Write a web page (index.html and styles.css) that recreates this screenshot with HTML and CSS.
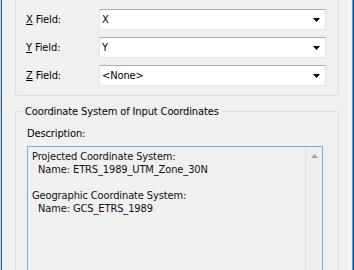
FILE: index.html
```html
<!DOCTYPE html>
<html>
<head>
<meta charset="utf-8">
<link rel="stylesheet" href="styles.css">
</head>
<body>
<div class="frame">
  <div class="panel">
    <div class="group1">
      <div class="row">
        <label class="lbl"><u>X</u> Field:</label>
        <div class="combo"><span>X</span><svg class="arrow" width="7" height="4" viewBox="0 0 7 4"><polygon points="0,0 7,0 3.5,4" fill="#000"/></svg></div>
      </div>
      <div class="row">
        <label class="lbl"><u>Y</u> Field:</label>
        <div class="combo"><span>Y</span><svg class="arrow" width="7" height="4" viewBox="0 0 7 4"><polygon points="0,0 7,0 3.5,4" fill="#000"/></svg></div>
      </div>
      <div class="row">
        <label class="lbl"><u>Z</u> Field:</label>
        <div class="combo"><span>&lt;None&gt;</span><svg class="arrow" width="7" height="4" viewBox="0 0 7 4"><polygon points="0,0 7,0 3.5,4" fill="#000"/></svg></div>
      </div>
    </div>
    <fieldset class="group2">
      <legend>Coordinate System of Input Coordinates</legend>
      <div class="desc-label">Description:</div>
      <div class="desc">
        <div class="desc-text">Projected Coordinate System:
  Name: ETRS_1989_UTM_Zone_30N

Geographic Coordinate System:
  Name: GCS_ETRS_1989</div>
        <div class="vscroll">
          <div class="sbtn"><svg width="7" height="4" viewBox="0 0 7 4"><polygon points="3.5,0 7,4 0,4" fill="#a3a3a3"/></svg></div>
        </div>
      </div>
    </fieldset>
  </div>
</div>
</body>
</html>
```
FILE: styles.css
```css
html, body {
  margin: 0;
  height: 270px;
  overflow: hidden;
  background: #f0f0f0;
}
body {
  font-family: "DejaVu Sans Condensed", "DejaVu Sans", sans-serif;
  font-size: 11px;
  line-height: 13px;
  letter-spacing: -0.12px;
  color: #000;
}
.frame {
  box-sizing: border-box;
  height: 270px;
  overflow: hidden;
  display: flex;
  border-left: 1px solid #b8cfe6;
  border-right: 1px solid #1d4f7f;
  box-shadow: inset 1px 0 #2a5d8f, inset -1px 0 #43a6e5;
}
.panel {
  flex: 1;
  margin: 0 3px 0 1px;
  border-right: 1px solid #fcfcfc;
}
.group1 {
  margin: 0 10px 0 13px;
  border: 1px solid #d5dfe5;
  border-top: none;
  border-radius: 0 0 3px 3px;
  padding: 9px 12px 9px 10px;
  display: flex;
  flex-direction: column;
  gap: 7px;
}
.row {
  display: flex;
  align-items: center;
}
.lbl {
  width: 73px;
  flex: none;
}
.combo {
  flex: 1;
  box-sizing: border-box;
  height: 21px;
  background: #fff;
  border: 1px solid;
  border-color: #abadb3 #e2e3ea #e3e9ef #e2e3ea;
  padding: 0 5px 0 2px;
  display: flex;
  align-items: center;
  justify-content: space-between;
}
.arrow { display: block; }
.group2 {
  margin: 9px 10px 0 13px;
  padding: 9px 15px 0 11px;
  border: 1px solid #d5dfe5;
  border-bottom: none;
  border-radius: 3px 3px 0 0;
  min-width: 0;
}
.group2 legend {
  padding: 0 2px;
  margin-left: -4px;
  line-height: 13px;
}
.desc-label {
  margin-bottom: 6px;
}
.desc {
  height: 123px;
  border: 1px solid #78aee0;
  border-bottom: none;
  background: #f0f0f0;
  display: flex;
}
.desc-text {
  flex: 1;
  padding: 3px 4px;
  white-space: pre;
  color: #111;
}
.vscroll {
  width: 16px;
  border-left: 1px solid #dedede;
  background: #efefef;
}
.sbtn {
  height: 17px;
  display: flex;
  align-items: center;
  justify-content: center;
}
.sbtn svg { display: block; }
```
